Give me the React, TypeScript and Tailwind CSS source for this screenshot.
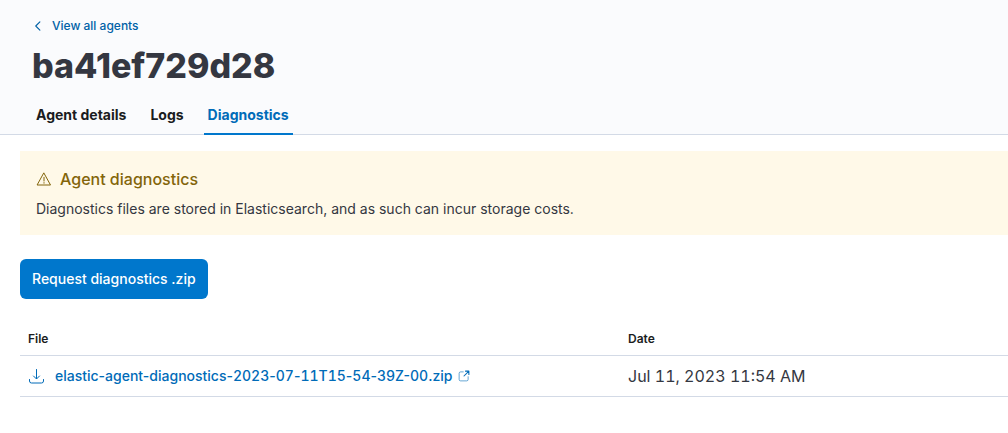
import React, { useState, type FC, type ReactNode } from 'react';
import clsx from 'clsx';

type TabId = 'details' | 'logs' | 'diagnostics';

interface DiagnosticsFile {
  name: string;
  date: string;
}

const TABS: { id: TabId; label: string }[] = [
  { id: 'details', label: 'Agent details' },
  { id: 'logs', label: 'Logs' },
  { id: 'diagnostics', label: 'Diagnostics' },
];

const FILES: DiagnosticsFile[] = [
  { name: 'elastic-agent-diagnostics-2023-07-11T15-54-39Z-00.zip', date: 'Jul 11, 2023 11:54 AM' },
];

const Icon: FC<{ className?: string; children: ReactNode }> = ({ className, children }) => (
  <svg
    viewBox="0 0 16 16"
    fill="none"
    stroke="currentColor"
    strokeLinecap="round"
    strokeLinejoin="round"
    aria-hidden="true"
    className={clsx('shrink-0', className)}
  >
    {children}
  </svg>
);

const FileName: FC<{ name: string }> = ({ name }) => (
  <span>
    {name.split(/(\d+)/).map((part, i) =>
      i % 2 === 1 ? (
        <span key={i} className="tabular-nums">
          {part}
        </span>
      ) : (
        part
      )
    )}
  </span>
);

const App: FC = () => {
  const [activeTab, setActiveTab] = useState<TabId>('diagnostics');

  return (
    <div className="min-h-screen overflow-x-hidden bg-white font-['Inter','Noto_Sans',sans-serif] text-[#343741]">
      <header className="border-b border-[#d3dae6] bg-[#fafbfd] pt-3.5 pl-8">
        <a href="#agents" className="inline-flex items-center gap-2 text-xs leading-5 font-medium text-[#0061a6]">
          <Icon className="size-3">
            <path d="M10.5 2.5 5 8l5.500 5.500" strokeWidth="1.500" />
          </Icon>
          View all agents
        </a>
        <h1 className="mt-2 text-[34px] leading-10 font-extrabold">ba41ef729d28</h1>
        <div role="tablist" className="-mb-px flex gap-4 pt-2.5">
          {TABS.map((tab) => (
            <button
              key={tab.id}
              type="button"
              role="tab"
              aria-selected={tab.id === activeTab}
              onClick={() => setActiveTab(tab.id)}
              className={clsx(
                'h-[39px] border-b-2 px-1 text-sm font-bold',
                tab.id === activeTab ? 'border-[#0077cc] text-[#006bb8]' : 'border-transparent text-[#1a1c21]'
              )}
            >
              {tab.label}
            </button>
          ))}
        </div>
      </header>

      <main className="pt-4 pl-5">
        {/* Storage cost warning */}
        <section className="bg-[#fff9e8] p-4">
          <h2 className="flex items-center gap-2 text-base leading-6 font-medium text-[#83650a]">
            <Icon className="size-4">
              <path d="M8 2.200 14.500 14h-13z" />
              <path d="M8 6.300v3.700M8 11.600v.6" />
            </Icon>
            Agent diagnostics
          </h2>
          <p className="mt-2 text-sm leading-5">
            Diagnostics files are stored in Elasticsearch, and as such can incur storage costs.
          </p>
        </section>

        <button
          type="button"
          className="mt-6 h-10 rounded-md bg-[#0077cc] px-3 text-sm font-medium text-white"
        >
          Request diagnostics .zip
        </button>

        {/* Diagnostics files */}
        <table className="mt-6 w-full table-fixed border-collapse text-left">
          <thead>
            <tr className="h-8 border-b border-[#d3dae6] text-xs text-[#1a1c21]">
              <th className="w-[600px] px-2 font-semibold">File</th>
              <th className="px-2 font-semibold">Date</th>
            </tr>
          </thead>
          <tbody>
            {FILES.map((file) => (
              <tr key={file.name} className="h-[41px] border-b border-[#d3dae6]">
                <td className="px-2">
                  <a href="#download" className="flex items-center text-sm font-medium text-[#006bb8]">
                    <Icon className="mr-[11px] size-4">
                      <path d="M8.500 1.500v9M5.500 8l3 3 3-3M1.500 11.500V13a2 2 0 0 0 2 2h10a2 2 0 0 0 2-2v-1.500" />
                    </Icon>
                    <FileName name={file.name} />
                    <Icon className="ml-1.5 size-3">
                      <path d="M7 2.500H3.500a2 2 0 0 0-2 2v8a2 2 0 0 0 2 2h8a2 2 0 0 0 2-2V9" opacity=".8" />
                      <path d="M10 1.500h4.500V6M14.500 1.500 8 8" strokeWidth="1.400" />
                    </Icon>
                  </a>
                </td>
                <td className="px-2 text-base tabular-nums">{file.date}</td>
              </tr>
            ))}
          </tbody>
        </table>
      </main>
    </div>
  );
};

export default App;
